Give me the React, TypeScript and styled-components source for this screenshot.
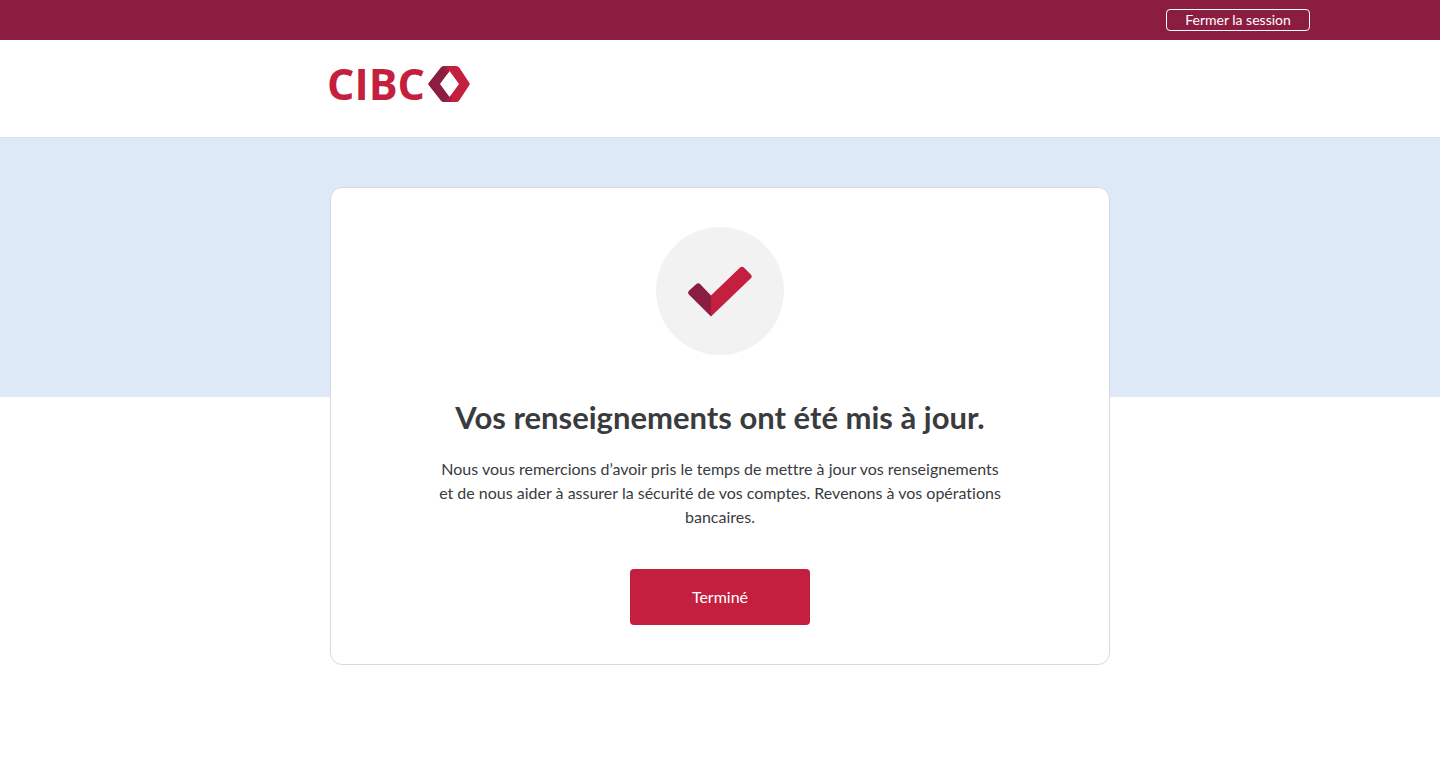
import React from "react";
import styled, { createGlobalStyle } from "styled-components";

const GlobalStyle = createGlobalStyle`
  *, *::before, *::after { box-sizing: border-box; }
  body {
    margin: 0;
    background: #ffffff;
    color: #393b3e;
    font-family: Lato, "Noto Sans", sans-serif;
    font-variant-ligatures: none;
  }
`;

const SessionBar = styled.div`
  background: #8b1d41;
`;

const SessionBarInner = styled.div`
  display: flex;
  align-items: center;
  justify-content: flex-end;
  max-width: 1180px;
  height: 40px;
  margin: 0 auto;
`;

const SignOffButton = styled.button`
  width: 144px;
  height: 22px;
  padding: 0;
  border: 1px solid #ffffff;
  border-radius: 4px;
  background: transparent;
  color: #ffffff;
  font-family: inherit;
  font-size: 14px;
  line-height: 20px;
  cursor: pointer;
`;

const Header = styled.header`
  border-bottom: 1px solid #dce3ec;
`;

const HeaderInner = styled.div`
  max-width: 780px;
  margin: 0 auto;
  padding: 26px 0 35px;
`;

const LogoLink = styled.a`
  display: block;
  width: 140px;
  height: 36px;
`;

const LogoDrawing = styled.svg`
  display: block;
  overflow: visible;
`;

const LogoWord = styled.text`
  font-family: "Open Sans", "Noto Sans", sans-serif;
  font-size: 43px;
  font-weight: 700;
  fill: #c41f3e;
`;

const Main = styled.main`
  padding: 49px 0 100px;
  background: linear-gradient(#dde9f7, #dde9f7) top / 100% 259px no-repeat;
`;

const Card = styled.section`
  display: flex;
  flex-direction: column;
  align-items: center;
  max-width: 780px;
  margin: 0 auto;
  padding: 39px 104px;
  border: 1px solid #d8d9da;
  border-radius: 12px;
  background: #ffffff;
  text-align: center;
`;

const StatusCircle = styled.div`
  display: grid;
  place-items: center;
  width: 128px;
  height: 128px;
  border-radius: 50%;
  background: #f2f2f2;
`;

const Title = styled.h1`
  margin: 42px 0 20px;
  font-size: 31px;
  font-weight: 700;
  line-height: 40px;
`;

const Message = styled.p`
  margin: 0 0 40px;
  font-size: 16px;
  line-height: 24px;
`;

const DoneButton = styled.button`
  width: 180px;
  height: 56px;
  border: 0;
  border-radius: 4px;
  background: #c41f3e;
  color: #ffffff;
  font-family: inherit;
  font-size: 16px;
  line-height: 24px;
  cursor: pointer;
`;

function Logo() {
  return (
    <LogoDrawing width="140" height="36" viewBox="0 0 140 36" role="img" aria-label="CIBC">
      <LogoWord x="-3" y="34">CIBC</LogoWord>
      <path d="M114 0h12q2 0 3.200 1.600L139.400 17q.8 1 0 2L129.200 34.400Q128 36 126 36h-11l4.500-5 9.500-13-9.500-13Z" fill="#c41f3e" />
      <path d="M113.500 0h1.500l4.500 5L110 18l9.500 13-3.500 5h-2q-2 0-3.200-1.600L98.600 19q-.8-1 0-2L110.800 1.600Q112 0 113.500 0Z" fill="#8b1d41" />
      <path d="M113.500 0h3l3 5-2.500 3.500Z M119.500 31l-3.500 5h4.500l2-5-3-.500Z" fill="#a91e40" />
    </LogoDrawing>
  );
}

function CheckMark() {
  return (
    <svg width="64" height="52" viewBox="0 0 64 52" aria-hidden="true">
      <path d="M23 30.500 12.300 19.300q-2.100-2-4.200 0L1.200 25.600q-2.100 2-.1 4.100L23 51.500Z" fill="#8b1d41" />
      <path d="M23 30.500 51.800 2.700q2.200-2 4.300 0l6.700 6.700q2 2.100-.2 4.200L23 51.500Z" fill="#c41f3e" />
    </svg>
  );
}

export default function App() {
  return (
    <>
      <GlobalStyle />
      <SessionBar>
        <SessionBarInner>
          <SignOffButton type="button">Fermer la session</SignOffButton>
        </SessionBarInner>
      </SessionBar>
      <Header>
        <HeaderInner>
          <LogoLink href="#">
            <Logo />
          </LogoLink>
        </HeaderInner>
      </Header>
      <Main>
        <Card>
          <StatusCircle>
            <CheckMark />
          </StatusCircle>
          <Title>Vos renseignements ont été mis à jour.</Title>
          <Message>
            Nous vous remercions d’avoir pris le temps de mettre à jour vos renseignements et de nous
            aider à assurer la sécurité de vos comptes. Revenons à vos opérations bancaires.
          </Message>
          <DoneButton type="button">Terminé</DoneButton>
        </Card>
      </Main>
    </>
  );
}
